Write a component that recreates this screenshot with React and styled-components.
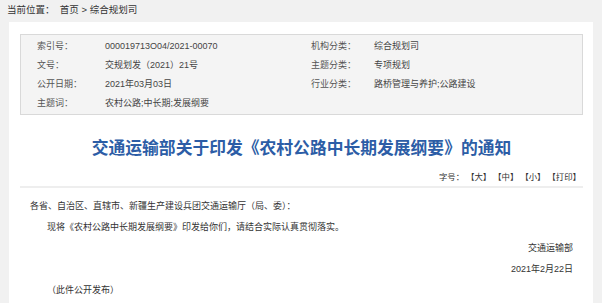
import React from "react"
import styled, { createGlobalStyle } from "styled-components"

const GlobalStyle = createGlobalStyle`
  html, body {
    margin: 0;
    padding: 0;
    background: #f1f1f1;
  }
  body {
    font-family: "Liberation Sans", "Noto Sans CJK SC", sans-serif;
    color: #444;
  }
`

const meta = [
  ["索引号：", "000019713O04/2021-00070", "机构分类：", "综合规划司"],
  ["文号：", "交规划发（2021）21号", "主题分类：", "专项规划"],
  ["公开日期：", "2021年03月03日", "行业分类：", "路桥管理与养护;公路建设"],
  ["主题词：", "农村公路;中长期;发展纲要", "", ""],
]

export default function App() {
  return (
    <Page>
      <GlobalStyle />
      <Crumb>
        当前位置：&nbsp;&nbsp;<a>首页</a> &gt; <a>综合规划司</a>
      </Crumb>
      <Panel>
        <MetaBox>
          {meta.map((row, i) => (
            <React.Fragment key={i}>
              <MetaLabel>{row[0]}</MetaLabel>
              <MetaValue>{row[1]}</MetaValue>
              <MetaLabel>{row[2]}</MetaLabel>
              <MetaValue>{row[3]}</MetaValue>
            </React.Fragment>
          ))}
        </MetaBox>
        <Title>交通运输部关于印发《农村公路中长期发展纲要》的通知</Title>
        <Tools>
          <span>字号：</span>
          <span>【大】</span>
          <span>【中】</span>
          <span>【小】</span>
          <span>【打印】</span>
        </Tools>
        <Body>
          <Para>各省、自治区、直辖市、新疆生产建设兵团交通运输厅（局、委）：</Para>
          <Para indent>现将《农村公路中长期发展纲要》印发给你们，请结合实际认真贯彻落实。</Para>
          <Para right>交通运输部</Para>
          <Para right>2021年2月22日</Para>
          <Para indent>（此件公开发布）</Para>
        </Body>
      </Panel>
    </Page>
  )
}

const Page = styled.div`
  display: flex;
  flex-direction: column;
  height: 100vh;
  overflow: hidden;
`

const Crumb = styled.div`
  flex: none;
  height: 22px;
  line-height: 20px;
  padding-left: 7px;
  font-size: 9.5px;
  color: #333;
  a {
    color: #333;
  }
`

const Panel = styled.div`
  flex: 1;
  margin: 0 9px;
  background: #fff;
  padding: 12px 10px 0 11px;
`

const MetaBox = styled.div`
  display: grid;
  grid-template-columns: 68px 206px 63px 1fr;
  grid-auto-rows: 19px;
  align-items: center;
  padding: 1px 0 2px 16px;
  background: #f4f4f4;
  border: 1px solid #d9d9d9;
  font-size: 9px;
`

const MetaLabel = styled.div`
  color: #555;
`

const MetaValue = styled.div`
  color: #444;
`

const Title = styled.h1`
  margin: 20px 0 0;
  text-align: center;
  font-size: 16.8px;
  line-height: 24px;
  font-weight: bold;
  color: #2c5da6;
  font-family: "Noto Sans CJK SC", sans-serif;
`

const Tools = styled.div`
  display: flex;
  justify-content: flex-end;
  gap: 2px;
  padding: 12px 2px 3px 0;
  line-height: 12px;
  font-size: 8.4px;
  color: #333;
  border-bottom: 2px solid #eeeeee;
  span {
    cursor: pointer;
  }
`

const Body = styled.div`
  padding: 8px 10px 0 10px;
  font-size: 9px;
  color: #333;
`

const Para = styled.p`
  margin: 0;
  line-height: 21px;
  text-indent: ${p => (p.indent ? "17px" : "0")};
  text-align: ${p => (p.right ? "right" : "left")};
`
